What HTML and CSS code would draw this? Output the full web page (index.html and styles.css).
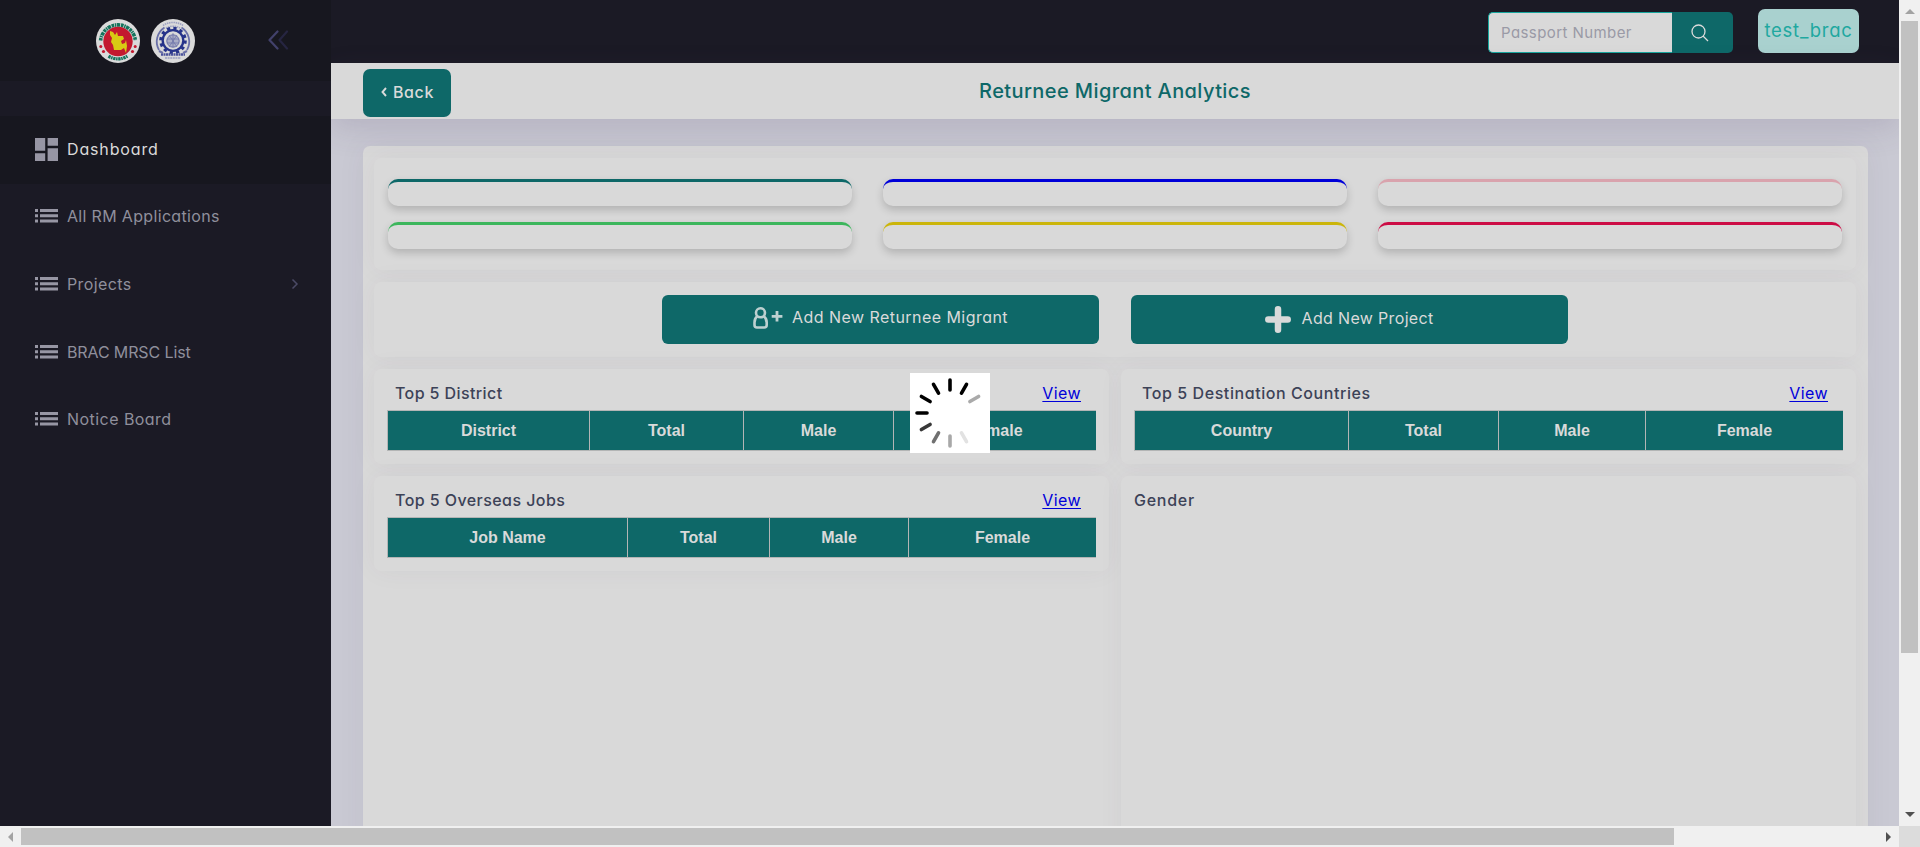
FILE: index.html
```
<!DOCTYPE html>
<html lang="en">
<head>
<meta charset="utf-8">
<title>Returnee Migrant Analytics</title>
<link rel="stylesheet" href="styles.css">
</head>
<body>
<svg width="0" height="0" class="defs">
  <symbol id="list" viewBox="0 0 23 14">
    <path d="M0 0h3v3H0zM5 0h18v3H5zM0 5.300h3v3H0zM5 5.300h18v3H5zM0 10.600h3v3H0zM5 10.600h18v3H5z"/>
  </symbol>
</svg>
<div class="frame">
  <div class="app">
    <aside class="sidebar">
      <div class="brand">
        <svg class="seal" viewBox="0 0 44 44">
          <circle cx="22" cy="22" r="22" fill="#dadada"/>
          <path d="M4.600 21.500a17.500 17.500 0 0 1 34.800 0" fill="none" stroke="#14735c" stroke-width="3.600" stroke-dasharray="2.600 .7 1.400 .6 3.400 .8"/>
          <path d="M12.500 37.100a17.800 17.800 0 0 0 19 0" fill="none" stroke="#14735c" stroke-width="3.200" stroke-dasharray="2.400 .6 1.500 .6"/>
          <circle cx="22" cy="22.500" r="14.700" fill="#c3192f"/>
          <path d="M14 12l3 1 2 3 2-3 1 4 5 0 1 3-3 2 1 3 3-1 1-3 1 6-1 7-2-5-3 2-3 0-4 0-1-5-2-3 1-4-2-3z" fill="#d8ca14"/>
          <g fill="#c3192f"><circle cx="4.800" cy="27.500" r="1.500"/><circle cx="7.500" cy="32.500" r="1.600"/><circle cx="39.200" cy="27.500" r="1.500"/><circle cx="36.500" cy="32.500" r="1.600"/></g>
        </svg>
        <svg class="seal" viewBox="0 0 44 44">
          <circle cx="22" cy="22" r="22" fill="#dadada"/>
          <path d="M8 31A16.800 16.800 0 0 1 13.500 8.500M36 31A16.800 16.800 0 0 0 30.500 8.500" fill="none" stroke="#6a70a8" stroke-width="1.800"/>
          <path d="M12 6.500a18 18 0 0 1 20 0M15 9a15 15 0 0 1 14 0" fill="none" stroke="#9da1c2" stroke-width="1.600" stroke-dasharray="1.500 .7"/>
          <circle cx="22" cy="21.500" r="12.300" fill="none" stroke="#26338a" stroke-width="3" stroke-dasharray="3.220 3.220"/>
          <circle cx="22" cy="21.500" r="10.300" fill="none" stroke="#26338a" stroke-width="2.300"/>
          <circle cx="22" cy="22" r="6.200" fill="#a9acc6" stroke="#6a70a8" stroke-width="1"/>
          <path d="M16 20h12M16 24h12M22 14v14M18 16l8 12M26 16l-8 12" stroke="#6a70a8" stroke-width=".7"/>
          <path d="M10 35.500h24" stroke="#4a529a" stroke-width="2.600" stroke-dasharray="2 .5"/>
          <path d="M8 32l4 2M36 32l-4 2" stroke="#6a70a8" stroke-width="2"/>
          <path d="M14 39h16" stroke="#9da1c2" stroke-width="1.300" stroke-dasharray="2 .6"/>
        </svg>
        <svg class="collapse" viewBox="0 0 21 20" fill="none" stroke-width="2.200" stroke-linecap="round" stroke-linejoin="round">
          <path d="M19 1.500L11.500 10l7.500 8.500" stroke="#262541"/><path d="M9.500 1.500L1.500 10l8 8.500" stroke="#42416b"/>
        </svg>
      </div>
      <nav class="nav">
        <a class="item active"><svg class="ico dash" viewBox="0 0 23 23"><path d="M0 0h10.200v12.800H0zM12.600 0H23v7.700H12.600zM0 15.200h10.200V23H0zM12.600 10.200H23V23H12.600z"/></svg><span class="t-dash">Dashboard</span></a>
        <a class="item"><svg class="ico"><use href="#list"/></svg><span class="t-rm">All RM Applications</span></a>
        <a class="item"><svg class="ico"><use href="#list"/></svg><span class="t-proj">Projects</span><svg class="more" viewBox="0 0 8 12"><path d="M1.500 1.500L6 6l-4.500 4.500" fill="none" stroke="#4b4a66" stroke-width="1.500"/></svg></a>
        <a class="item"><svg class="ico"><use href="#list"/></svg><span class="t-mrsc">BRAC MRSC List</span></a>
        <a class="item"><svg class="ico"><use href="#list"/></svg><span class="t-notice">Notice Board</span></a>
      </nav>
    </aside>
    <main class="main">
      <header class="topbar">
        <div class="search">
          <div class="field">Passport Number</div>
          <div class="go"><svg viewBox="0 0 18 18" width="18" height="18" fill="none" stroke="#dadada" stroke-width="1.300"><circle cx="7.500" cy="7.500" r="6.500"/><path d="M12 12l5 5"/></svg></div>
        </div>
        <div class="user">test_brac</div>
      </header>
      <div class="subheader">
        <div class="back"><svg viewBox="0 0 6 10" width="6" height="10"><path d="M5 1L1.500 5 5 9" fill="none" stroke="#dadada" stroke-width="1.900"/></svg><span>Back</span></div>
        <h1 class="title">Returnee Migrant Analytics</h1>
      </div>
      <section class="page">
        <div class="card stats">
          <div class="stat teal"></div><div class="stat blue"></div><div class="stat pink"></div>
          <div class="stat green"></div><div class="stat yellow"></div><div class="stat red"></div>
        </div>
        <div class="card actions">
          <div class="btn b1"><svg width="30" height="22" viewBox="0 0 30 22" fill="none" stroke="#bdd0d0"><circle cx="7.500" cy="5.800" r="4.500" stroke-width="2.600"/><path d="M4.200 9.300C2 11 1.500 13 1.500 15.500V18q0 2.500 2.500 2.500h7.200q2.500 0 2.500-2.500v-2.500C13.700 13 13 11 10.800 9.300" stroke-width="2.600"/><path d="M24 4v10.500M18.700 9.300h10.700" stroke-width="2.800"/></svg><span>Add New Returnee Migrant</span></div>
          <div class="btn b2"><svg width="26" height="27" viewBox="0 0 26 27" stroke="#d9dada" stroke-width="6.500" stroke-linecap="round"><path d="M13 3.300v20.400M3.300 13.500h19.400"/></svg><span>Add New Project</span></div>
        </div>
        <div class="row">
          <div class="card panel">
            <div class="head"><h2 class="t-dist">Top 5 District</h2><a class="view">View</a></div>
            <div class="table district"><b>District</b><b>Total</b><b>Male</b><b>Female</b></div>
          </div>
          <div class="card panel">
            <div class="head"><h2 class="t-dest">Top 5 Destination Countries</h2><a class="view">View</a></div>
            <div class="table country"><b>Country</b><b>Total</b><b>Male</b><b>Female</b></div>
          </div>
        </div>
        <div class="row">
          <div class="card panel">
            <div class="head"><h2 class="t-jobs">Top 5 Overseas Jobs</h2><a class="view">View</a></div>
            <div class="table jobs"><b>Job Name</b><b>Total</b><b>Male</b><b>Female</b></div>
          </div>
          <div class="card panel gender">
            <div class="head"><h2 class="t-gender">Gender</h2></div>
          </div>
        </div>
      </section>
    </main>
    <div class="loader">
      <svg viewBox="-40 -40 80 80" width="80" height="80" stroke="#000" stroke-width="3.600" stroke-linecap="round">
        <path d="M0-33v10"/>
        <path d="M0-33v10" transform="rotate(30)"/>
        <path d="M0-33v10" transform="rotate(60)" stroke="#aaa"/>
        <path d="M0-33v10" transform="rotate(150)" stroke="#e2e2e2"/>
        <path d="M0-33v10" transform="rotate(180)" stroke="#a8a8a8"/>
        <path d="M0-33v10" transform="rotate(210)" stroke="#707070"/>
        <path d="M0-33v10" transform="rotate(240)" stroke="#383838"/>
        <path d="M0-33v10" transform="rotate(270)"/>
        <path d="M0-33v10" transform="rotate(300)"/>
        <path d="M0-33v10" transform="rotate(330)"/>
      </svg>
    </div>
  </div>
  <div class="vbar"><i class="arrow up"></i><div class="vthumb"></div><i class="arrow down"></i></div>
  <div class="hbar"><i class="arrow left"></i><div class="hthumb"></div><i class="arrow right"></i></div>
  <div class="corner"></div>
</div>
</body>
</html>
```
FILE: styles.css
```
* { box-sizing: border-box; }
html, body { margin: 0; height: 100%; overflow: hidden; }
body { font-family: Inter, "Open Sans", sans-serif; font-size: 16px; font-feature-settings: "cv11"; color: #3c4257; }
svg { display: block; flex: none; }
.defs { position: absolute; }
h1, h2 { margin: 0; }
span, h1, h2, .field, .user, .view { white-space: nowrap; }

.frame { display: grid; grid-template: 826px 21px / 1899px 21px; width: 1920px; height: 847px; overflow: hidden; }
.app { position: relative; display: flex; min-width: 0; overflow: hidden; background: #c9c9d3; }

/* Sidebar */
.sidebar { width: 331px; flex: none; background: #1b1a25; position: relative; z-index: 2; }
.brand { height: 81px; background: #17171f; display: flex; padding: 19px 0 0 96px; gap: 11px; }
.seal { width: 44px; height: 44px; }
.collapse { width: 21px; height: 20px; margin: 11px 0 0 72px; }
.brand .collapse { margin-left: 61.500px; }
.nav { padding-top: 35px; }
.item { display: flex; align-items: center; height: 67.600px; padding: 0 32px 2px 35px; color: #8f8f9c; }
.item.active { background: #17171f; color: #dadada; }
.ico { width: 23px; height: 14px; margin-right: 9px; fill: #9796a4; }
.ico.dash { height: 23px; margin-top: 2px; }
.more { width: 8px; height: 12px; margin-left: auto; }
.t-dash { letter-spacing: .85px; }
.t-rm { letter-spacing: .33px; }
.t-proj { letter-spacing: .4px; }
.t-mrsc { letter-spacing: -.12px; }
.t-notice { letter-spacing: .45px; }

/* Top bar */
.main { flex: 1; min-width: 0; display: flex; flex-direction: column; }
.topbar { height: 63px; flex: none; background: #1b1a25; display: flex; justify-content: flex-end; padding: 9px 40px 0 0; gap: 25px; }
.search { display: flex; width: 245px; height: 41px; margin-top: 3px; }
.field { width: 184px; background: #d9d9d9; border: 1px solid #17a69e; border-right: 0; border-radius: 5px 0 0 5px; padding-left: 12px; font-size: 15px; line-height: 40px; letter-spacing: .42px; color: #9a9aa6; }
.go { flex: 1; background: #0e6868; border-radius: 0 5px 5px 0; display: flex; align-items: center; padding-left: 19px; }
.user { width: 101px; height: 44px; border-radius: 7px; background: #a9d1cf; color: #1fa8a0; font-size: 18.500px; font-weight: 400; line-height: 43px; text-align: center; letter-spacing: .75px; }
.subheader { position: relative; z-index: 1; height: 56px; flex: none; background: #d9d9d9; display: grid; grid-template-columns: 1fr auto 1fr; padding: 6px 32px 0; box-shadow: 0 10px 30px rgba(82, 63, 105, .16); }
.back { width: 88px; height: 48px; border-radius: 7px; background: #0e6868; color: #dadada; display: flex; align-items: center; gap: 6px; padding: 0 0 2px 18px; font-weight: 500; letter-spacing: .6px; }
.title { font-size: 20px; font-weight: 500; letter-spacing: .4px; line-height: 44px; color: #0e6868; }

/* Page */
.page { flex: none; height: 760px; margin: 27px 31px 0 32px; padding: 12px 12px 0 11px; border-radius: 7px; background: #d9d9d9; box-shadow: 0 0 30px rgba(82, 63, 105, .05); display: flex; flex-direction: column; gap: 12px; }
.card { border-radius: 7px; background: #d9d9d9; box-shadow: 0 0 26px rgba(82, 63, 105, .05); }
.stats { height: 112px; flex: none; padding: 21px 13px 0 14px; display: grid; grid-template-columns: 464px 464px 464px; grid-auto-rows: 27px; gap: 16px 31px; }
.stat { border-top: 3px solid; border-radius: 10px; box-shadow: 0 4px 8px rgba(0, 0, 0, .18); }
.teal { border-color: #0e6868; }
.blue { border-color: #0000d9; }
.pink { border-color: #d9a3ad; }
.green { border-color: #3cb65c; }
.yellow { border-color: #cbb50a; }
.red { border-color: #cc0c45; }
.actions { height: 75px; flex: none; display: flex; justify-content: center; gap: 32px; padding-top: 13px; }
.btn { width: 437px; height: 49px; border-radius: 6px; background: #0e6868; color: #dadada; display: flex; align-items: center; }
.btn span { position: relative; top: -1px; }
.b1 { padding: 0 0 4px 91px; gap: 9px; letter-spacing: .45px; }
.b2 { padding: 0 0 1px 134px; gap: 10.500px; letter-spacing: .34px; }
.row { display: grid; grid-template-columns: 735px 735px; gap: 12px; align-items: start; }
.panel { height: 95px; padding: 13px 13px 0 13px; }
.panel.gender { height: 420px; }
.head { display: flex; justify-content: space-between; height: 28px; line-height: 23px; padding: 0 15px 0 8px; }
.gender .head { padding-left: 0; }
h2 { font-size: 16px; font-weight: 500; line-height: 23px; }
.t-dist { letter-spacing: .4px; }
.t-dest { letter-spacing: .57px; }
.t-jobs { letter-spacing: .43px; }
.t-gender { letter-spacing: .74px; }
.view { color: #0000d9; text-decoration: underline; text-underline-offset: 2px; letter-spacing: .4px; }
.table { display: grid; height: 41px; border: 1px solid #b3b5b5; border-right: 0; background: #0e6868; color: #d9dada; font-family: "Liberation Sans", sans-serif; font-feature-settings: normal; }
.table b { text-align: center; line-height: 40px; }
.table b + b { border-left: 1px solid #b3b5b5; }
.district { grid-template-columns: 201px 154px 150px 1fr; }
.country { grid-template-columns: 213px 150px 147px 1fr; }
.jobs { grid-template-columns: 239px 142px 139px 1fr; }

/* Loading indicator above the page */
.loader { position: absolute; left: 910px; top: 373px; width: 80px; height: 80px; background: #fff; z-index: 5; }

/* Scrollbars */
.vbar { background: #f0f0f0; display: flex; flex-direction: column; align-items: center; padding: 9px 0; }
.vthumb { width: 17px; height: 632px; margin-top: 7px; background: #c1c1c1; }
.hbar { background: #f0f0f0; display: flex; align-items: center; padding: 0 8px; }
.hthumb { width: 1653px; height: 17px; margin-left: 8px; background: #c1c1c1; }
.corner { background: #dcdcdc; }
.arrow { width: 0; height: 0; border: 5px solid transparent; flex: none; }
.up { border-bottom-color: #a3a3a3; border-top: 0; }
.down { border-top-color: #505050; border-bottom: 0; margin-top: auto; }
.left { border-right-color: #a3a3a3; border-left: 0; }
.right { border-left-color: #505050; border-right: 0; margin-left: auto; }
```
